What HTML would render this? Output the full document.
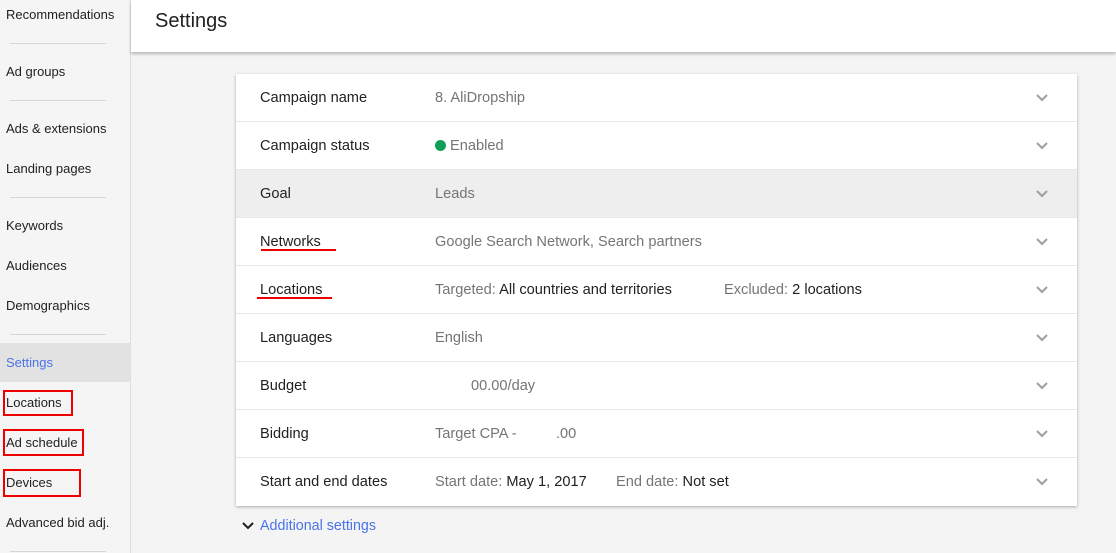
<!DOCTYPE html>
<html><head><style>
*{margin:0;padding:0;box-sizing:border-box}
body{width:1116px;height:553px;overflow:hidden;background:#f4f4f4;font-family:"Liberation Sans",Arial,sans-serif;position:relative;color:#212121}
.side{position:absolute;left:0;top:0;width:131px;height:553px;background:#f5f5f5;border-right:1px solid #ddd}
.si{position:absolute;left:6px;font-size:13px;color:#212121;line-height:16px}
.sep{position:absolute;left:10px;width:96px;height:1px;background:#d6d6d6}
.hdr{position:absolute;left:131px;top:0;right:0;height:52px;background:#fff;box-shadow:0 2px 3px rgba(0,0,0,.25)}
.hdr span{position:absolute;left:24px;top:10px;font-size:20px;color:#212121}
.card{position:absolute;left:236px;top:74px;width:841px;height:432px;background:#fff;box-shadow:0 1px 3px rgba(0,0,0,.3)}
.row{position:relative;height:48px;border-bottom:1px solid #e8e8e8;font-size:14.6px}
.row:last-child{border-bottom:none}
.l{position:absolute;left:24px;top:16px;color:#212121}
.v{position:absolute;left:199px;top:16px;color:#757575}
.v b{font-weight:normal;color:#212121}
.chev{position:absolute;right:28px;top:19px;width:14px;height:10px}
.box{position:absolute;border:2px solid #e00;}
.ul{position:absolute;height:2px;background:#e00}
</style></head><body>
<div class="side">
<div class="si" style="top:7px">Recommendations</div>
<div class="sep" style="top:43px"></div>
<div class="si" style="top:64px">Ad groups</div>
<div class="sep" style="top:100px"></div>
<div class="si" style="top:121px">Ads &amp; extensions</div>
<div class="si" style="top:161px">Landing pages</div>
<div class="sep" style="top:197px"></div>
<div class="si" style="top:218px">Keywords</div>
<div class="si" style="top:258px">Audiences</div>
<div class="si" style="top:298px">Demographics</div>
<div class="sep" style="top:334px"></div>
<div style="position:absolute;left:0;top:343px;width:130px;height:39px;background:#e2e2e2"></div>
<div class="si" style="top:355px;color:#4a73e8">Settings</div>
<div class="si" style="top:395px">Locations</div>
<div class="si" style="top:435px">Ad schedule</div>
<div class="si" style="top:475px">Devices</div>
<div class="si" style="top:515px">Advanced bid adj.</div>
<div class="sep" style="top:551px"></div>
</div>
<div class="box" style="left:3px;top:390px;width:70px;height:26px"></div>
<div class="box" style="left:3px;top:429px;width:81px;height:27px"></div>
<div class="box" style="left:3px;top:469px;width:78px;height:28px"></div>
<div class="hdr"><span>Settings</span></div>
<div class="card">
<div class="row"><span class="l">Campaign name</span><span class="v">8. AliDropship</span><svg class="chev" viewBox="0 0 14 10"><path d="M2 2l5 5 5-5" fill="none" stroke="#9e9e9e" stroke-width="2"/></svg></div>
<div class="row"><span class="l">Campaign status</span><span class="v"><span style="display:inline-block;width:11px;height:11px;border-radius:50%;background:#0f9d58;margin-right:4px;vertical-align:-1px"></span>Enabled</span><svg class="chev" viewBox="0 0 14 10"><path d="M2 2l5 5 5-5" fill="none" stroke="#9e9e9e" stroke-width="2"/></svg></div>
<div class="row" style="background:#eee"><span class="l">Goal</span><span class="v">Leads</span><svg class="chev" viewBox="0 0 14 10"><path d="M2 2l5 5 5-5" fill="none" stroke="#9e9e9e" stroke-width="2"/></svg></div>
<div class="row"><span class="l">Networks</span><span class="v">Google Search Network, Search partners</span><svg class="chev" viewBox="0 0 14 10"><path d="M2 2l5 5 5-5" fill="none" stroke="#9e9e9e" stroke-width="2"/></svg></div>
<div class="row"><span class="l">Locations</span><span class="v">Targeted: <b>All countries and territories</b></span><span class="v" style="left:488px">Excluded: <b>2 locations</b></span><svg class="chev" viewBox="0 0 14 10"><path d="M2 2l5 5 5-5" fill="none" stroke="#9e9e9e" stroke-width="2"/></svg></div>
<div class="row"><span class="l">Languages</span><span class="v">English</span><svg class="chev" viewBox="0 0 14 10"><path d="M2 2l5 5 5-5" fill="none" stroke="#9e9e9e" stroke-width="2"/></svg></div>
<div class="row"><span class="l">Budget</span><span class="v" style="left:235px">00.00/day</span><svg class="chev" viewBox="0 0 14 10"><path d="M2 2l5 5 5-5" fill="none" stroke="#9e9e9e" stroke-width="2"/></svg></div>
<div class="row"><span class="l">Bidding</span><span class="v">Target CPA -</span><span class="v" style="left:320px">.00</span><svg class="chev" viewBox="0 0 14 10"><path d="M2 2l5 5 5-5" fill="none" stroke="#9e9e9e" stroke-width="2"/></svg></div>
<div class="row"><span class="l">Start and end dates</span><span class="v">Start date: <b>May 1, 2017</b></span><span class="v" style="left:380px">End date: <b>Not set</b></span><svg class="chev" viewBox="0 0 14 10"><path d="M2 2l5 5 5-5" fill="none" stroke="#9e9e9e" stroke-width="2"/></svg></div>
</div>
<div class="ul" style="left:261px;top:249px;width:75px"></div>
<div class="ul" style="left:257px;top:297px;width:75px"></div>
<svg style="position:absolute;left:241px;top:521px" width="14" height="10" viewBox="0 0 14 10"><path d="M2 2l5 5 5-5" fill="none" stroke="#212121" stroke-width="2"/></svg>
<div style="position:absolute;left:260px;top:518px;font-size:14.3px;color:#4a73e8">Additional settings</div>
</body></html>
